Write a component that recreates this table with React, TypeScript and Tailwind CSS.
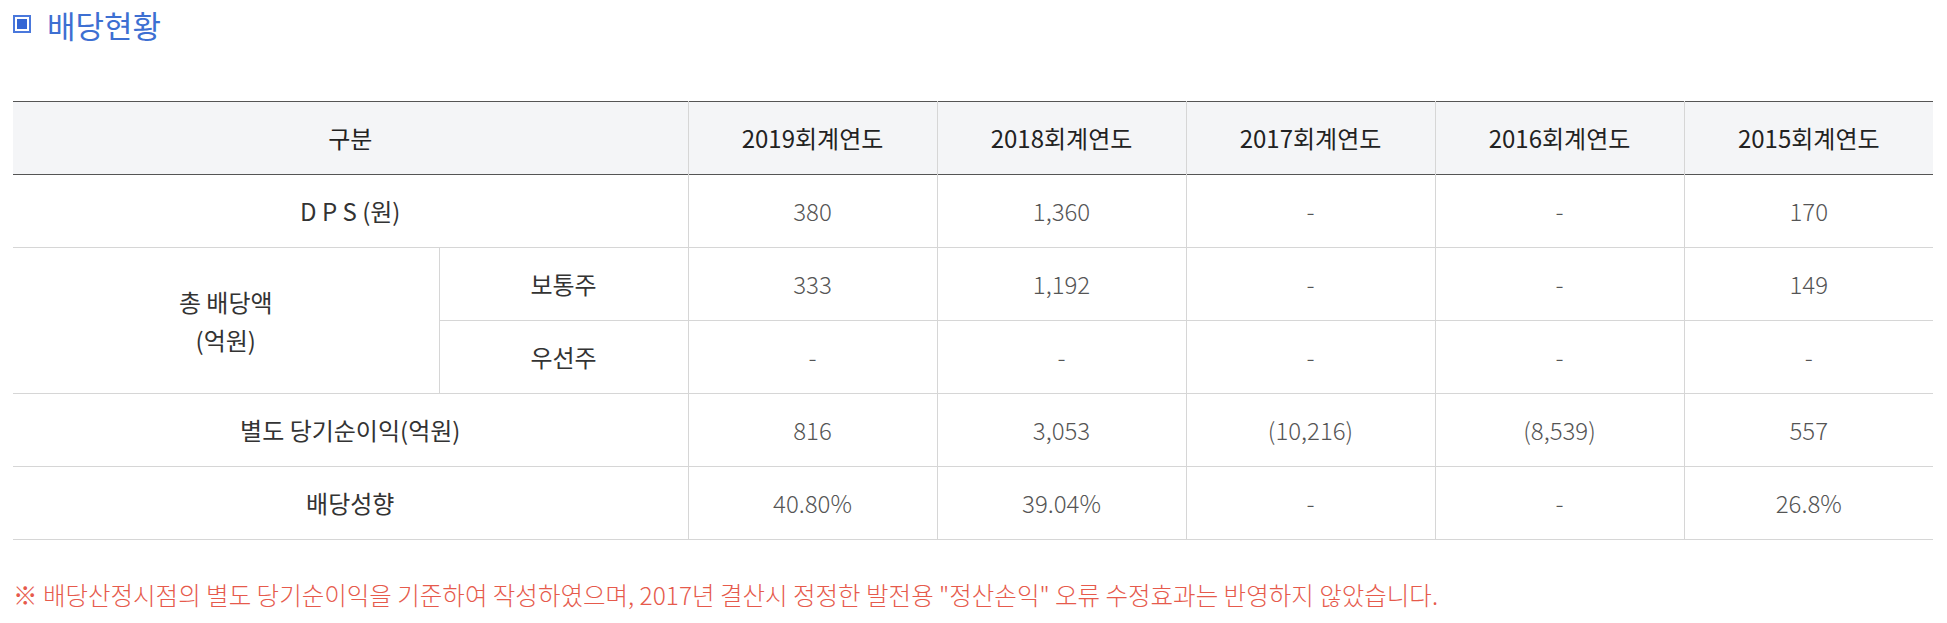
const FONT = "font-['Noto_Sans_CJK_KR','Noto_Sans',sans-serif]";

const years = ['2019회계연도', '2018회계연도', '2017회계연도', '2016회계연도', '2015회계연도'];

const dps = ['380', '1,360', '-', '-', '170'];
const common = ['333', '1,192', '-', '-', '149'];
const preferred = ['-', '-', '-', '-', '-'];
const netIncome = ['816', '3,053', '(10,216)', '(8,539)', '557'];
const payout = ['40.80%', '39.04%', '-', '-', '26.8%'];

function ValueCells({ values }: { values: string[] }) {
  return (
    <>
      {values.map((v, i) => (
        <td
          key={i}
          className="border-l border-[#d6d6d6] text-center align-middle font-light text-[#555]"
        >
          {v}
        </td>
      ))}
    </>
  );
}

export default function App() {
  return (
    <div className={`${FONT} bg-white min-h-[623px] pl-[13px] pr-[14px]`}>
      {/* Title */}
      <div className="flex items-center gap-[16px] h-[48px]">
        <span className="w-[18px] h-[18px] border-[2px] border-[#4a78dc] p-[2px] flex">
          <span className="flex-1 bg-[#3466d4]" />
        </span>
        <h2 className="text-[31px] leading-none text-[#3d6fd2] font-normal">배당현황</h2>
      </div>

      {/* Table */}
      <table className="mt-[53px] w-full border-collapse table-fixed text-[24px]">
        <colgroup>
          <col className="w-[426px]" />
          <col className="w-[249px]" />
          <col className="w-[249px]" />
          <col className="w-[249px]" />
          <col className="w-[249px]" />
          <col className="w-[249px]" />
          <col />
        </colgroup>
        <thead>
          <tr className="h-[73px] bg-[#f4f5f7] border-t border-b border-[#555]">
            <th colSpan={2} className="font-normal text-[#222]">
              구분
            </th>
            {years.map((y) => (
              <th key={y} className="border-l border-[#d6d6d6] font-normal text-[#222]">
                {y}
              </th>
            ))}
          </tr>
        </thead>
        <tbody className="text-[#333]">
          <tr className="h-[73px] border-b border-[#d6d6d6]">
            <td colSpan={2} className="text-center">
              D P S (원)
            </td>
            <ValueCells values={dps} />
          </tr>
          <tr className="h-[73px] border-b border-[#d6d6d6]">
            <td rowSpan={2} className="text-center leading-[38px]">
              총 배당액
              <br />
              (억원)
            </td>
            <td className="border-l border-[#d6d6d6] text-center">보통주</td>
            <ValueCells values={common} />
          </tr>
          <tr className="h-[73px] border-b border-[#d6d6d6]">
            <td className="border-l border-[#d6d6d6] text-center">우선주</td>
            <ValueCells values={preferred} />
          </tr>
          <tr className="h-[73px] border-b border-[#d6d6d6]">
            <td colSpan={2} className="text-center">
              별도 당기순이익(억원)
            </td>
            <ValueCells values={netIncome} />
          </tr>
          <tr className="h-[73px] border-b border-[#d6d6d6]">
            <td colSpan={2} className="text-center">
              배당성향
            </td>
            <ValueCells values={payout} />
          </tr>
        </tbody>
      </table>

      {/* Note */}
      <p className="mt-[37px] text-[24.5px] font-light text-[#e65a4c]">
        ※ 배당산정시점의 별도 당기순이익을 기준하여 작성하였으며, 2017년 결산시 정정한 발전용 "정산손익" 오류 수정효과는 반영하지 않았습니다.
      </p>
    </div>
  );
}
